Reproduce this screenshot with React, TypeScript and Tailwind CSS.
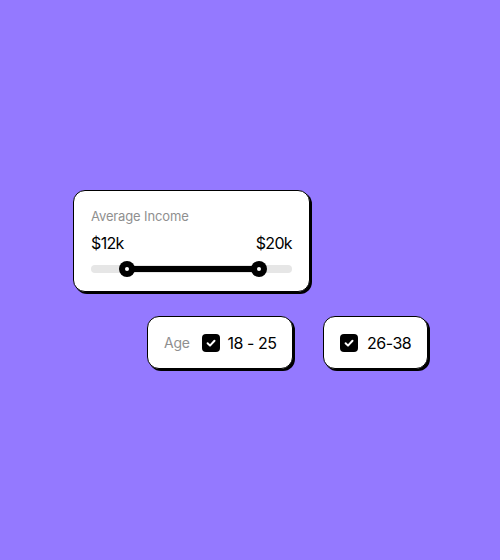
import React from 'react';

function Check() {
  return (
    <span className="flex h-[18px] w-[18px] shrink-0 items-center justify-center rounded-[4px] bg-black">
      <svg viewBox="0 0 12 12" className="h-[12px] w-[12px]" fill="none">
        <path d="M2.6 6.3 L5 8.6 L9.5 3.7" stroke="#fff" strokeWidth="2" strokeLinecap="round" strokeLinejoin="round" />
      </svg>
    </span>
  );
}

function Card({ className = '', children }: { className?: string; children: React.ReactNode }) {
  return (
    <div className={`rounded-[12px] border border-black bg-white shadow-[2px_2px_0_#000] ${className}`}>
      {children}
    </div>
  );
}

export default function App() {
  return (
    <div
      className="h-[560px] w-[500px] bg-[#9479ff] pt-[190px]"
      style={{ fontFamily: 'Inter, "Liberation Sans", sans-serif' }}
    >
      <Card className="ml-[73px] w-[237px] px-[17px] pt-[17px] pb-[14px]">
        <div className="text-[13px] leading-[16px] tracking-[-0.01em] text-[#8f8f8f]">Average Income</div>
        <div className="mt-[9px] flex justify-between text-[16px] leading-[20px] tracking-[-0.04em] text-black">
          <span>$12k</span>
          <span>$20k</span>
        </div>
        <div className="relative mt-[8px] h-4">
          <div className="absolute left-0 right-0 top-[4px] h-2 rounded-full bg-[#e6e6e6]" />
          <div className="absolute left-[36px] top-[5px] h-[6px] w-[132px] bg-black" />
          <div className="absolute left-[28px] top-0 flex h-4 w-4 items-center justify-center rounded-full bg-black">
            <div className="h-1 w-1 rounded-full bg-white" />
          </div>
          <div className="absolute left-[160px] top-0 flex h-4 w-4 items-center justify-center rounded-full bg-black">
            <div className="h-1 w-1 rounded-full bg-white" />
          </div>
        </div>
      </Card>

      <div className="ml-[147px] mt-[24px] flex gap-[30px]">
        <Card className="flex h-[53px] w-[146px] items-center whitespace-nowrap px-[16px]">
          <span className="text-[14px] tracking-[-0.02em] text-[#8f8f8f]">Age</span>
          <span className="ml-[12px]">
            <Check />
          </span>
          <span className="ml-[8px] text-[16px] tracking-[-0.03em] text-black">18 - 25</span>
        </Card>
        <Card className="flex h-[53px] w-[105px] items-center whitespace-nowrap px-[16px]">
          <Check />
          <span className="ml-[9px] text-[16px] tracking-[-0.03em] text-black">26-38</span>
        </Card>
      </div>
    </div>
  );
}
